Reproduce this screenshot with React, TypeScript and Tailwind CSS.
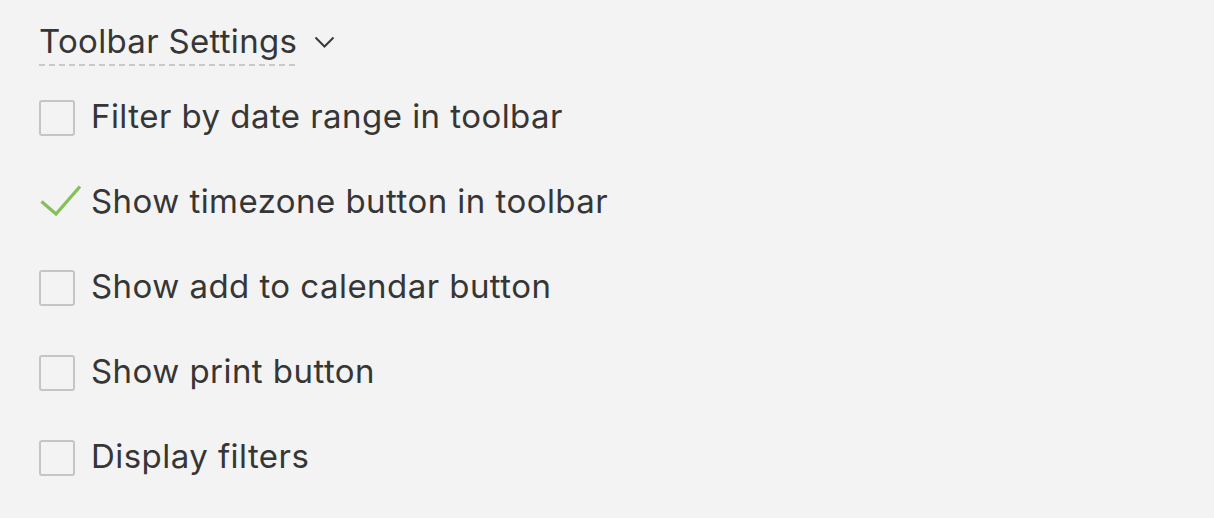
import React from "react";

const items = [
  { label: "Filter by date range in toolbar", checked: false },
  { label: "Show timezone button in toolbar", checked: true },
  { label: "Show add to calendar button", checked: false },
  { label: "Show print button", checked: false },
  { label: "Display filters", checked: false },
];

function Box({ checked }: { checked: boolean }) {
  if (checked) {
    return (
      <svg width="42" height="36" viewBox="0 0 42 36" className="mr-[-6px] shrink-0 overflow-visible">
        <polyline
          points="2.5,16.5 17,29 41,1.5"
          fill="none"
          stroke="#84bf5a"
          strokeWidth="3.3"
          strokeLinecap="butt"
          strokeLinejoin="miter"
        />
      </svg>
    );
  }
  return <div className="w-[36px] h-[36px] shrink-0 rounded-[3px] border-2 border-[#c2c6c9]" />;
}

export default function App() {
  return (
    <div
      className="w-full h-[518px] bg-[#f3f3f3] text-[#363636] pl-[39px]"
      style={{ fontFamily: "Inter, 'Noto Sans', sans-serif" }}
    >
      <div className="pt-[21px] flex items-start">
        <div className="flex items-center">
          <span className="text-[33px] leading-[40px] tracking-[0.3px] pb-[2px] pr-[1px] bg-[repeating-linear-gradient(to_right,#c9c9c9_0_6px,transparent_6px_10px)] bg-no-repeat bg-bottom bg-[length:100%_2px]">
            <span className="block pb-[3px]">Toolbar Settings</span>
          </span>
          <svg width="22" height="13" viewBox="0 0 22 13" className="ml-[16px] mt-[-3px]">
            <polyline points="1.5,1.5 10.5,10.5 19.5,1.5" fill="none" stroke="#3a3a3a" strokeWidth="2" />
          </svg>
        </div>
      </div>
      <div className="mt-[9px] flex flex-col">
        {items.map((it) => (
          <div key={it.label} className="h-[85px] flex items-center">
            <Box checked={it.checked} />
            <span className="ml-[16px] text-[33px] leading-[40px] tracking-[0.45px] pb-[3px] whitespace-nowrap">
              {it.label}
            </span>
          </div>
        ))}
      </div>
    </div>
  );
}
